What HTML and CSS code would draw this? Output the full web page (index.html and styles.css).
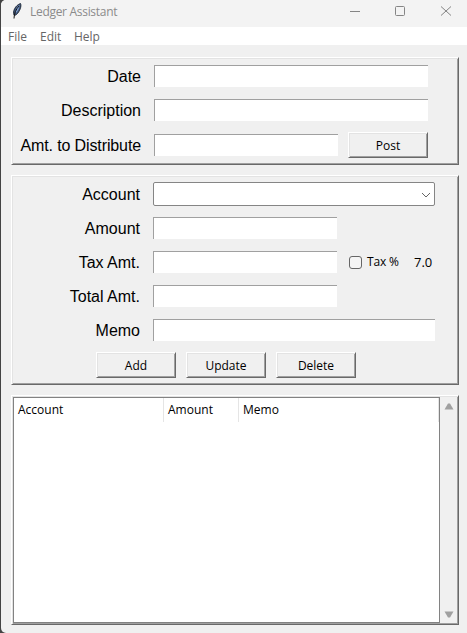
FILE: index.html
```html
<!DOCTYPE html>
<html lang="en">
<head>
<meta charset="utf-8">
<title>Ledger Assistant</title>
<link rel="stylesheet" href="styles.css">
</head>
<body>
<div class="window">
  <header class="titlebar">
    <svg class="feather" width="12" height="18" viewBox="0 0 12 18">
      <path d="M3 13C1.500 9.500 4 3.500 9.500 1.500C10.800 4 8.800 9.500 5.500 12.500L3.500 13.500Z" fill="#40587c" stroke="#172030" stroke-width=".9"/>
      <path d="M4.500 10.500C4.500 7 6 4.500 8.500 3C8.500 6 7 9 5 11Z" fill="#7f9fd2"/>
      <path d="M3 16.500C3 12 5 7 8 4" fill="none" stroke="#151515" stroke-width="1"/>
    </svg>
    <span class="title">Ledger Assistant</span>
    <svg class="controls" width="104" height="14" viewBox="0 0 104 14" fill="none" stroke="#858585">
      <path d="M0 6.500H10"/>
      <rect x="45.500" y="1.500" width="9" height="9" rx="1"/>
      <path d="M91 1.500L101 10.500M101 1.500L91 10.500"/>
    </svg>
  </header>
  <nav class="menubar"><span class="file">File</span><span class="edit">Edit</span><span class="help">Help</span></nav>
  <main class="content">
    <section class="panel entry">
      <div class="row"><label>Date</label><div class="field wide"></div></div>
      <div class="row"><label>Description</label><div class="field wide"></div></div>
      <div class="row last"><label class="long">Amt. to Distribute</label><div class="field"></div><div class="button post">Post</div></div>
    </section>
    <section class="panel detail">
      <div class="row"><label>Account</label><div class="combo">
        <svg width="10" height="6" viewBox="0 0 10 6"><path d="M1 1L5 5L9 1" fill="none" stroke="#666"/></svg>
      </div></div>
      <div class="row"><label>Amount</label><div class="field"></div></div>
      <div class="row"><label>Tax Amt.</label><div class="field"></div><span class="check"></span><span class="tax">Tax %</span><span class="rate">7.0</span></div>
      <div class="row"><label>Total Amt.</label><div class="field"></div></div>
      <div class="row"><label>Memo</label><div class="field full"></div></div>
      <div class="row last actions"><div class="button">Add</div><div class="button">Update</div><div class="button">Delete</div></div>
    </section>
    <section class="panel list">
      <div class="tree"><div class="heads"><span>Account</span><span>Amount</span><span>Memo</span></div></div>
      <div class="scroll">
        <svg width="10" height="7" viewBox="0 0 10 7"><path d="M4 .5H6L9.500 6.500H.5Z" fill="#a0a0a0"/></svg>
        <svg width="10" height="7" viewBox="0 0 10 7"><path d="M.5 .5H9.500L6 6.500H4Z" fill="#a0a0a0"/></svg>
      </div>
    </section>
  </main>
</div>
</body>
</html>
```
FILE: styles.css
```css
* { box-sizing: border-box; }
body {
  margin: 0;
  background: #444;
  font: 12px/16px "Open Sans", "Noto Sans", sans-serif;
  color: #000;
}
.window {
  height: 633px;
  margin-left: 1px;
  background: #f0f0f0;
  border-radius: 5px 0 0 5px;
  overflow: hidden;
}
.titlebar {
  display: flex;
  align-items: flex-start;
  height: 27px;
  padding: 2px 13px 0 10px;
  background: #f3f3f3;
  color: #8b8b8b;
}
.title { margin: 2px 0 0 7px; letter-spacing: -.3px; white-space: nowrap; }
.controls { margin: 3px 0 0 auto; }
.menubar {
  display: flex;
  height: 18px;
  padding-left: 7px;
  background: #fff;
  color: #666;
  line-height: 20px;
}
.file { width: 32px; }
.edit { width: 34px; }
.content {
  display: flex;
  flex-direction: column;
  gap: 10px;
  padding: 12px 8px 0 10px;
}
/* Raised bevel: light outer edge, soft inner edge */
.panel, .button {
  border: 1px solid;
  border-color: #fff #696969 #696969 #fff;
  box-shadow: inset 1px 1px #e3e3e3, inset -1px -1px #a0a0a0;
  padding: 1px;
}
.row { display: flex; align-items: center; height: 34px; }
.row.last { height: 36px; }
label {
  width: 128px;
  margin-right: 13px;
  padding-top: 2px;
  font: 16px/20px "Liberation Sans", Arial, sans-serif;
  text-align: right;
  white-space: nowrap;
}
.long { letter-spacing: -.12px; }
.detail label { width: 127px; }
.field {
  width: 184px;
  height: 22px;
  background: #fff;
  border: solid #a0a0a0;
  border-width: 1px 0 0 1px;
}
.wide { width: 274px; }
.full { width: 282px; }
.button {
  width: 80px;
  height: 26px;
  line-height: 23px;
  text-align: center;
}
.post { margin-left: 10px; }
.combo {
  display: flex;
  align-items: center;
  justify-content: flex-end;
  width: 282px;
  height: 24px;
  padding: 2px 3px 0 0;
  background: #fff;
  border: 1px solid #858585;
  border-radius: 2px;
}
.check {
  width: 13px;
  height: 13px;
  margin-left: 12px;
  border: 1px solid #666;
  border-radius: 3px;
  background: #f5f5f5;
}
.tax { width: 47px; margin-left: 5px; letter-spacing: -.2px; }
.rate { font-size: 13px; }
.actions { padding-left: 83px; gap: 10px; }
.list { display: flex; height: 230px; }
.tree {
  width: 427px;
  background: #fff;
  border: 1px solid #828282;
}
.heads {
  display: grid;
  grid-template-columns: 150px 75px 200px;
  height: 24px;
  line-height: 24px;
}
.heads span { padding-left: 4px; border-right: 1px solid #e5e5e5; }
.scroll {
  display: flex;
  flex: 1;
  flex-direction: column;
  align-items: center;
  justify-content: space-between;
  padding: 6px 0 5px;
}
```
